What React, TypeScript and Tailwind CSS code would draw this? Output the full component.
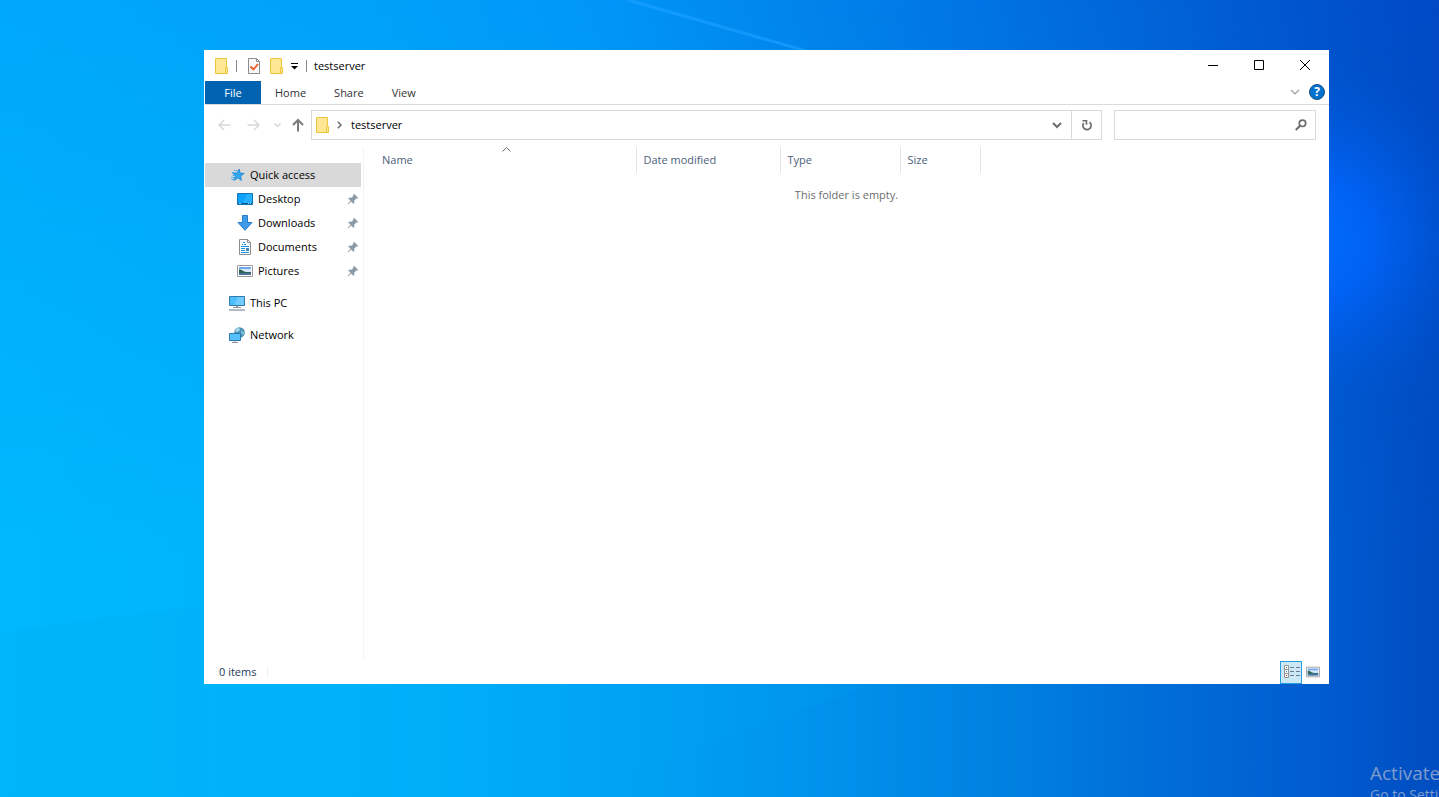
import { useState } from 'react'
import type { ReactNode } from 'react'

type NavItem = {
  id: string
  label: string
  icon: ReactNode
  pinned?: boolean
}

const TABS = ['Home', 'Share', 'View']

const COLUMNS = [
  { label: 'Date modified', width: 'w-36' },
  { label: 'Type', width: 'w-30' },
  { label: 'Size', width: 'w-20' },
]

function FolderIcon() {
  return (
    <svg width="16" height="18" viewBox="0 0 16 18" className="shrink-0">
      <path d="M1.5 1.5h11v15h-11z" fill="#ffe794" stroke="#ecc63f" />
      <path d="M11.5 10.5h2v6h-2z" fill="#ffe794" stroke="#ecc63f" />
    </svg>
  )
}

function PropertiesIcon() {
  return (
    <svg width="14" height="18" viewBox="0 0 14 18" className="shrink-0">
      <path d="M1.5 1.5h8l3 3v12h-11z" fill="#f7f7f7" stroke="#8d8d8d" />
      <path d="M9.5 1.5v3h3" fill="none" stroke="#8d8d8d" />
      <path d="M3.5 9.5l3 3 4.5-5.5" fill="none" stroke="#f05a22" strokeWidth="1.8" />
    </svg>
  )
}

function QuickAccessIcon() {
  return (
    <svg width="16" height="16" viewBox="0 0 16 16" className="shrink-0">
      <path d="M10.2 2l.8 4 4.2.5-3.500 2.400.7 4.600-3.400-2.700-4.200 2.600 1.600-4.500-2.700-2.800 4.200-.1z" fill="#2ea7f0" stroke="#1684d0" strokeWidth=".8" />
      <path d="M5 3.500h3M3 5.500h2M3.500 8.500h2M2 10.500h3M2.500 12.500h2" stroke="#4cb0ee" />
    </svg>
  )
}

function DesktopIcon() {
  return (
    <svg width="16" height="16" viewBox="0 0 16 16" className="shrink-0">
      <path d="M.5 2.500h15v11H.5z" fill="#0ea2fb" stroke="#1173b5" />
      <path d="M10 3h5v9H6z" fill="#27b0ff" />
      <path d="M1 12.500h14" stroke="#0a5c96" />
      <path d="M2 12.500h2M11 12.500h1M13 12.500h1" stroke="#8fd2fb" />
    </svg>
  )
}

function DownloadsIcon() {
  return (
    <svg width="16" height="16" viewBox="0 0 16 16" className="shrink-0">
      <path d="M5.500.5h5v7h4.500L8 15.300 1 7.500h4.500z" fill="#3d9be9" stroke="#2a7ecb" />
    </svg>
  )
}

function DocumentsIcon() {
  return (
    <svg width="16" height="16" viewBox="0 0 16 16" className="shrink-0">
      <path d="M2.500.5h8l3 3v12h-11z" fill="#fff" stroke="#8b8f93" />
      <path d="M10.500.5v3h3" fill="none" stroke="#8b8f93" />
      <path d="M6 3.500h2M5 5.500h1M7 5.500h2M4 7.500h8M4 9.500h4M4 11.500h4M4 13.500h8" stroke="#1e90e0" />
      <path d="M9 9h3v3H9z" fill="#3f86bd" />
    </svg>
  )
}

function PicturesIcon({ size = 16 }: { size?: number }) {
  return (
    <svg width={size} height={size} viewBox="0 0 16 16" className="shrink-0">
      <path d="M.5 2.500h15v11H.5z" fill="#fff" stroke="#9a9a9a" />
      <path d="M2 4h12v8H2z" fill="#6fa8f0" />
      <path d="M2 6h12v3H2z" fill="#d4e8f6" />
      <path d="M2 6.500c3 0 4 2 7 2.500h5v1H2z" fill="#2f6050" />
      <path d="M2 10h12v2H2z" fill="#47749a" />
    </svg>
  )
}

function ThisPcIcon() {
  return (
    <svg width="16" height="16" viewBox="0 0 16 16" className="shrink-0">
      <path d="M.5 1.500h15v9H.5z" fill="#4dbdfd" stroke="#327ba9" />
      <path d="M9 2h6v8H5z" fill="#73ccff" />
      <path d="M7 11h2v1H7z" fill="#8a97a3" />
      <path d="M4 12.500h8" stroke="#8a97a3" />
      <path d="M0 15h16" stroke="#9aa5b5" strokeWidth="1.5" />
    </svg>
  )
}

function NetworkIcon() {
  return (
    <svg width="16" height="16" viewBox="0 0 16 16" className="shrink-0">
      <circle cx="10.5" cy="5.5" r="5.3" fill="#4691b8" />
      <path d="M7 2c2-2 4-1 4 .5S9 5 7.500 5 6 3 7 2z" fill="#a9d7e8" />
      <path d="M12.500 3.500c1 0 2.500 1 2.500 2.500s-1 2-2 1.500-1.500-4-.5-4z" fill="#7fbcd6" />
      <path d="M.5 6.500h11v7H.5z" fill="#55c0fd" stroke="#2d7bad" />
      <path d="M6 14v1M3 15.500h6" stroke="#8a97a3" />
    </svg>
  )
}

function PinIcon() {
  return (
    <svg width="12" height="12" viewBox="0 0 12 12" className="shrink-0">
      <path d="M7 .8L11.200 5l-1 .8-.9-.2-2 2 .1 2.200-1 .9L4.200 8.500 1 11.500l-.4-.4L3.500 7.800 1.300 5.600l.9-1 2.200.1 2-2L6.200 1.700z" fill="#8e9aa3" />
    </svg>
  )
}

function DetailsViewIcon() {
  return (
    <svg width="17" height="14" viewBox="0 0 17 14" className="shrink-0">
      <path d="M1.500.5h4v12h-4zM1.500 4.500h4M1.500 8.500h4" fill="#fff" stroke="#949494" />
      <path d="M3 2h1v1H3z" fill="#3e8f62" />
      <path d="M3 6h1v1H3z" fill="#3878c8" />
      <path d="M3 10h1v1H3z" fill="#b02020" />
      <path d="M7 2.500h4M13 2.500h4M7 6.500h4M13 6.500h4M7 10.500h4M13 10.500h4" stroke="#6f7c83" />
    </svg>
  )
}

const QUICK_ITEMS: NavItem[] = [
  { id: 'desktop', label: 'Desktop', icon: <DesktopIcon />, pinned: true },
  { id: 'downloads', label: 'Downloads', icon: <DownloadsIcon />, pinned: true },
  { id: 'documents', label: 'Documents', icon: <DocumentsIcon />, pinned: true },
  { id: 'pictures', label: 'Pictures', icon: <PicturesIcon />, pinned: true },
]

function Wallpaper() {
  return (
    <svg className="absolute inset-0 h-full w-full" viewBox="0 0 1439 797" preserveAspectRatio="none" aria-hidden="true">
      <defs>
        <linearGradient id="top">
          <stop offset="0" stopColor="#00a8fb" />
          <stop offset=".25" stopColor="#00a2f9" />
          <stop offset=".42" stopColor="#0096f8" />
          <stop offset=".55" stopColor="#0085ec" />
          <stop offset=".68" stopColor="#0074e4" />
          <stop offset=".8" stopColor="#0064d8" />
          <stop offset=".92" stopColor="#0053cd" />
          <stop offset="1" stopColor="#004ac6" />
        </linearGradient>
        <linearGradient id="bottom">
          <stop offset="0" stopColor="#00b8fd" />
          <stop offset=".28" stopColor="#00b1f9" />
          <stop offset=".4" stopColor="#00a6f5" />
          <stop offset=".55" stopColor="#0095ee" />
          <stop offset=".7" stopColor="#0080e0" />
          <stop offset=".8" stopColor="#006ed8" />
          <stop offset=".93" stopColor="#005ace" />
          <stop offset="1" stopColor="#004cc0" />
        </linearGradient>
        <linearGradient id="fade" x1="0" y1="0" x2="0" y2="1">
          <stop offset="0" stopColor="#000" />
          <stop offset=".7" stopColor="#fff" />
        </linearGradient>
        <mask id="lower">
          <path d="M0 0h1439v797H0z" fill="url(#fade)" />
        </mask>
        <radialGradient id="glow" gradientUnits="userSpaceOnUse" cx="1310" cy="240" r="180">
          <stop offset="0" stopColor="#006cff" />
          <stop offset=".35" stopColor="#0064fa" stopOpacity=".85" />
          <stop offset="1" stopColor="#0056d4" stopOpacity="0" />
        </radialGradient>
      </defs>
      <path d="M0 0h1439v797H0z" fill="url(#top)" />
      <path d="M0 0h1439v797H0z" fill="url(#bottom)" mask="url(#lower)" />
      <path d="M0 0h1439v797H0z" fill="url(#glow)" />
      <path d="M628 0L810 52" stroke="#18a0ff" strokeOpacity=".7" strokeWidth="3" />
      <path d="M0 632L204 605V797H0z" fill="#00b0f4" fillOpacity=".3" />
      <path d="M560 797L870 686H204V797z" fill="#00a8f8" fillOpacity=".15" />
    </svg>
  )
}

type NavRowProps = {
  item: NavItem
  selected: boolean
  nested?: boolean
  onSelect: (id: string) => void
}

function NavRow({ item, selected, nested, onSelect }: NavRowProps) {
  return (
    <button
      onClick={() => onSelect(item.id)}
      className={`flex h-6 w-full items-center gap-[5px] pr-0.5 text-left ${nested ? 'pl-8' : 'pl-6'} ${selected ? 'bg-[#d9d9d9]' : ''}`}
    >
      {item.icon}
      <span className="flex-1">{item.label}</span>
      {item.pinned && <PinIcon />}
    </button>
  )
}

export default function App() {
  const [selected, setSelected] = useState('quick')
  const [query, setQuery] = useState('')

  return (
    <div className="relative flex h-screen overflow-hidden bg-[#00a2f8] pt-[50px] pr-[110px] pb-[113px] pl-[204px] font-['Open_Sans','Noto_Sans',sans-serif] text-[11px] leading-4 text-black">
      <Wallpaper />

      <main className="relative flex min-w-0 flex-1 flex-col bg-white pl-px">
        {/* title bar */}
        <header className="flex h-[31px] shrink-0 items-center pr-px">
          <div className="flex flex-1 items-center pl-[9px]">
            <FolderIcon />
            <span className="ml-[6px] h-3 w-px bg-[#8a8a8a]" />
            <button className="ml-[10px]" aria-label="Properties"><PropertiesIcon /></button>
            <button className="ml-2" aria-label="New folder"><FolderIcon /></button>
            <button className="ml-[6px]" aria-label="Customize toolbar">
              <svg width="7" height="8" viewBox="0 0 7 8">
                <path d="M0 1.500h7" stroke="#000" />
                <path d="M0 4h7L3.500 7.500z" />
              </svg>
            </button>
            <span className="ml-2 h-3 w-px bg-[#8a8a8a]" />
            <h1 className="ml-[7px]">testserver</h1>
          </div>
          <button className="flex h-full w-[46px] items-center justify-center pb-0.5" aria-label="Minimize">
            <svg width="10" height="10" viewBox="0 0 10 10"><path d="M0 5.500h10" stroke="#000" /></svg>
          </button>
          <button className="flex h-full w-[46px] items-center justify-center pb-0.5" aria-label="Maximize">
            <svg width="10" height="10" viewBox="0 0 10 10"><path d="M.5.5h9v9h-9z" fill="none" stroke="#000" /></svg>
          </button>
          <button className="flex h-full w-[46px] items-center justify-center pb-0.5" aria-label="Close">
            <svg width="10" height="10" viewBox="0 0 10 10"><path d="M0 0l10 10M10 0L0 10" stroke="#000" /></svg>
          </button>
        </header>

        {/* ribbon tabs */}
        <nav className="flex h-6 shrink-0 items-center border-b border-[#dadbdc] text-[#333]">
          <button className="h-full w-14 bg-[#0063b1] text-white">File</button>
          {TABS.map(tab => (
            <button key={tab} className="h-full px-[14px]">{tab}</button>
          ))}
          <div className="ml-auto flex items-center gap-[9px] pr-1 pb-0.5">
            <button aria-label="Expand ribbon">
              <svg width="10" height="6" viewBox="0 0 10 6"><path d="M1 1l4 4 4-4" fill="none" stroke="#9b9b9b" strokeWidth="1.2" /></svg>
            </button>
            <button className="flex size-4 items-center justify-center rounded-full border border-[#1d4f80] bg-[#0072cf] text-xs font-bold text-white" aria-label="Help">?</button>
          </div>
        </nav>

        {/* address bar */}
        <div className="flex h-10 shrink-0 items-center pr-[13px]">
          <div className="flex w-[106px] shrink-0 items-center pl-[13px]">
            <button aria-label="Back">
              <svg width="13" height="12" viewBox="0 0 13 12"><path d="M12.500 6H1M6 1L1 6l5 5" fill="none" stroke="#d8d8d8" strokeWidth="1.5" /></svg>
            </button>
            <button className="ml-4" aria-label="Forward">
              <svg width="13" height="12" viewBox="0 0 13 12"><path d="M.5 6H12M7 1l5 5-5 5" fill="none" stroke="#d8d8d8" strokeWidth="1.5" /></svg>
            </button>
            <button className="ml-[14px]" aria-label="Recent locations">
              <svg width="7" height="5" viewBox="0 0 7 5"><path d="M.5.5l3 3 3-3" fill="none" stroke="#d0d0d0" strokeWidth="1.2" /></svg>
            </button>
            <button className="ml-[11px]" aria-label="Up">
              <svg width="12" height="14" viewBox="0 0 12 14"><path d="M6 13.500V2M1 7l5-5 5 5" fill="none" stroke="#7b7b7b" strokeWidth="2" /></svg>
            </button>
          </div>
          <div className="flex h-[30px] flex-1 items-center border border-[#d9d9d9] pl-[3px]">
            <FolderIcon />
            <svg width="5" height="8" viewBox="0 0 5 8" className="ml-[6px]"><path d="M.8.8L4 4 .8 7.200" fill="none" stroke="#6d6d6d" strokeWidth="1.5" /></svg>
            <button className="ml-[9px]">testserver</button>
            <button className="ml-auto flex h-full w-7 items-center justify-center" aria-label="Previous locations">
              <svg width="10" height="7" viewBox="0 0 10 7"><path d="M1 1l4 4 4-4" fill="none" stroke="#6d6d6d" strokeWidth="2" /></svg>
            </button>
            <button className="flex h-full w-[30px] items-center justify-center border-l border-[#d9d9d9]" aria-label="Refresh">
              <svg width="12" height="12" viewBox="0 0 12 12">
                <path d="M8.500 3.200A4.100 4.100 0 1 1 2.700 4" fill="none" stroke="#6d6d6d" strokeWidth="1.8" />
                <path d="M1.500 1.700h4v4" fill="none" stroke="#6d6d6d" strokeWidth="1.6" />
              </svg>
            </button>
          </div>
          <label className="ml-3 flex h-[30px] w-[202px] items-center border border-[#d9d9d9] pr-2">
            <input
              aria-label="Search testserver"
              value={query}
              onChange={e => setQuery(e.target.value)}
              className="min-w-0 flex-1 px-2 outline-none"
            />
            <svg width="12" height="12" viewBox="0 0 12 12">
              <circle cx="7.5" cy="4.3" r="3.2" fill="none" stroke="#6d6d6d" strokeWidth="1.7" />
              <path d="M5.300 6.500L.8 11" stroke="#6d6d6d" strokeWidth="2" />
            </svg>
          </label>
        </div>

        <div className="flex min-h-0 flex-1 pt-0.5">
          <aside className="w-[159px] shrink-0 border-r border-[#f3f3f3] pt-4 pr-0.5">
            <NavRow item={{ id: 'quick', label: 'Quick access', icon: <QuickAccessIcon /> }} selected={selected === 'quick'} onSelect={setSelected} />
            {QUICK_ITEMS.map(item => (
              <NavRow key={item.id} item={item} nested selected={selected === item.id} onSelect={setSelected} />
            ))}
            <div className="mt-2">
              <NavRow item={{ id: 'pc', label: 'This PC', icon: <ThisPcIcon /> }} selected={selected === 'pc'} onSelect={setSelected} />
            </div>
            <div className="mt-2">
              <NavRow item={{ id: 'network', label: 'Network', icon: <NetworkIcon /> }} selected={selected === 'network'} onSelect={setSelected} />
            </div>
          </aside>

          <section className="min-w-0 flex-1">
            <table className="w-full table-fixed">
              <thead>
                <tr className="text-left text-[#4c607a]">
                  <th className="relative h-[26px] w-[272px] border-r border-[#e5e5e5] p-0 pl-[18px] font-normal">
                    Name
                    <svg width="9" height="5" viewBox="0 0 9 5" className="absolute top-0 left-[138px]"><path d="M.5 4.500l4-4 4 4" fill="none" stroke="#6d6d6d" /></svg>
                  </th>
                  {COLUMNS.map(col => (
                    <th key={col.label} className={`${col.width} border-r border-[#e5e5e5] p-0 pl-[7px] font-normal`}>{col.label}</th>
                  ))}
                  <th className="p-0" />
                </tr>
              </thead>
              <tbody>
                <tr>
                  <td colSpan={5} className="p-0 pt-[14px] text-center text-[#6d6d6d]">This folder is empty.</td>
                </tr>
              </tbody>
            </table>
          </section>
        </div>

        {/* status bar */}
        <footer className="flex h-6 shrink-0 items-center pl-[14px] text-[#1e395b]">
          <span>0 items</span>
          <span className="ml-[11px] h-3 w-px bg-[#f0f0f0]" />
          <button className="ml-auto flex h-[23px] w-[22px] items-center justify-center border border-[#26a0da] bg-[#cbe8f6]" aria-label="Details view"><DetailsViewIcon /></button>
          <button className="mr-[9px] ml-1" aria-label="Large icons view"><PicturesIcon size={14} /></button>
        </footer>
      </main>

      {/* activation watermark, runs off the screen corner */}
      <div className="absolute right-0 bottom-0 h-9 w-[69px] overflow-hidden whitespace-nowrap text-[#7f9ccb]">
        <p className="text-[19px] leading-6">Activate</p>
        <p className="text-sm leading-5">Go to Setti</p>
      </div>
    </div>
  )
}
